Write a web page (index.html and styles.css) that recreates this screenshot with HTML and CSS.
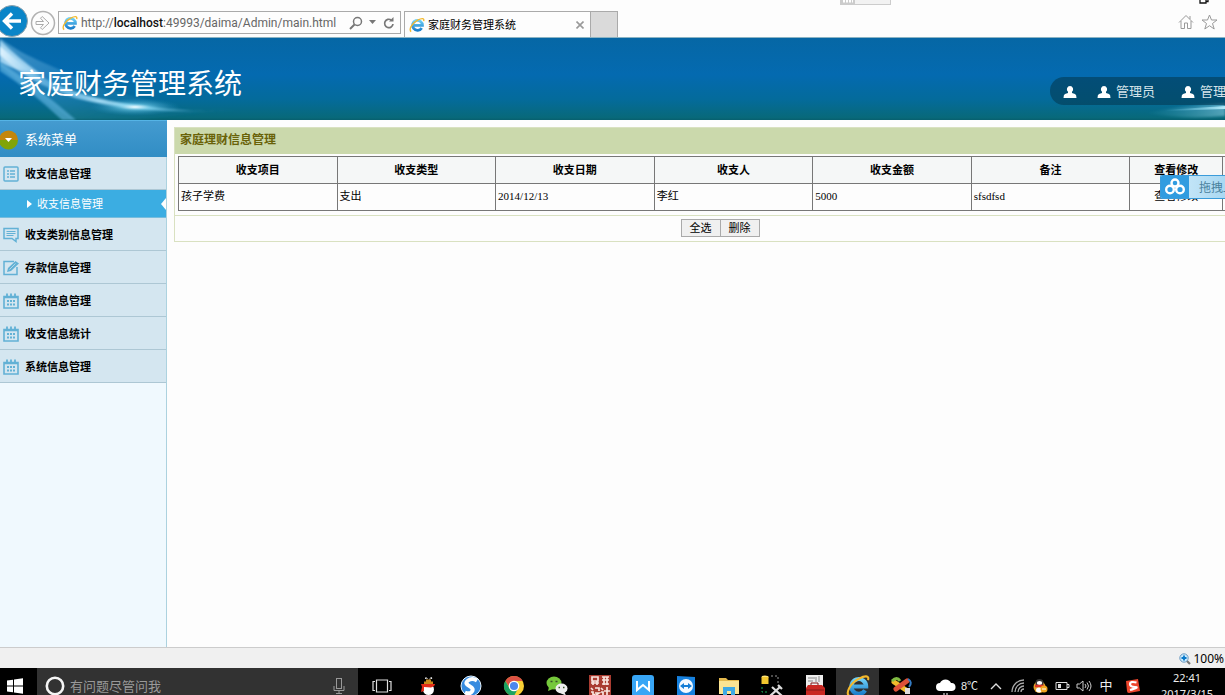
FILE: index.html
```html
<!DOCTYPE html>
<html lang="zh-CN">
<head>
<meta charset="utf-8">
<title>家庭财务管理系统</title>
<link rel="stylesheet" href="styles.css">
</head>
<body>
<svg class="defs" width="0" height="0" aria-hidden="true">
  <defs>
    <linearGradient id="ieBlue" x1="0" y1="0" x2="0" y2="1"><stop offset="0" stop-color="#6fd0f7"/><stop offset="1" stop-color="#1b7fcb"/></linearGradient>
    <symbol id="ie" viewBox="0 0 22 22">
      <path d="M17.500 15A6.800 6.800 0 1 1 18.500 11.500H6" fill="none" stroke="url(#ieBlue)" stroke-width="3.800"/>
      <path d="M3 20C-1 18 4 8 12 4.200 17 1.600 21.500 1 20.200 5.600" fill="none" stroke="#f4b92c" stroke-width="1.900"/>
    </symbol>
    <symbol id="user" viewBox="0 0 14 14"><path d="M7 1a3.300 3.300 0 0 1 2 5.800v1.200l3 1q1.500.6 1.500 4H.5q0-3.400 1.500-4l3-1V6.800A3.300 3.300 0 0 1 7 1z" fill="#fff"/></symbol>
    <symbol id="calendar" viewBox="0 0 16 16">
      <path d="M1 3.500h14v11.500H1z" fill="none" stroke="#62b1d5" stroke-width="1.600"/>
      <path d="M1 4.300h14M4 .5v3M8 .5v3M12 .5v3" stroke="#62b1d5" stroke-width="1.800"/>
      <path d="M4 8h8M4 11.500h8" stroke="#62b1d5" stroke-width="2" stroke-dasharray="2 1"/>
    </symbol>
  </defs>
</svg>

<div class="browser-bar">
  <button class="back" type="button" aria-label="后退"><svg width="34" height="34" viewBox="0 0 34 34"><circle cx="17" cy="17" r="15.500" fill="#0a85c8" stroke="#8fa3ae"/><path d="M26 17H10M17 9.500L9.500 17l7.500 7.500" fill="none" stroke="#fff" stroke-width="3.400"/></svg></button>
  <button class="forward" type="button" aria-label="前进"><svg width="26" height="26" viewBox="0 0 26 26"><circle cx="13" cy="13" r="11.500" fill="#fdfdfd" stroke="#b2b2b2" stroke-width="1.500"/><path d="M6 11.500h7.500l-3-3.300 1.700-1.700 6.800 6.500-6.800 6.500-1.700-1.700 3-3.300H6z" fill="none" stroke="#aaa"/></svg></button>
  <div class="address">
    <svg class="ie-small"><use href="#ie"/></svg>
    <div class="url" role="textbox" contenteditable="true" spellcheck="false" aria-label="地址">http://<b>localhost</b>:49993/daima/Admin/main.html</div>
    <button type="button" aria-label="搜索"><svg width="14" height="14" viewBox="0 0 14 14"><circle cx="8.500" cy="5.500" r="4" fill="none" stroke="#777" stroke-width="1.500"/><path d="M5.500 8.500L1 13" stroke="#777" stroke-width="2"/></svg></button>
    <button type="button" aria-label="展开"><svg width="8" height="5" viewBox="0 0 8 5"><path d="M0 0h7L3.500 4z" fill="#777"/></svg></button>
    <button type="button" aria-label="刷新"><svg width="12" height="14" viewBox="0 0 12 14"><path d="M10 8a4.200 4.200 0 1 1-1.800-4" fill="none" stroke="#777" stroke-width="1.700"/><path d="M6 5.500h4.500V1z" fill="#777"/></svg></button>
  </div>
  <div class="tab">
    <svg class="ie-small"><use href="#ie"/></svg>
    <span>家庭财务管理系统</span>
    <button type="button" aria-label="关闭标签页"><svg width="8" height="8" viewBox="0 0 8 8"><path d="M.5.5l7 7m0-7l-7 7" stroke="#999" stroke-width="1.600"/></svg></button>
  </div>
  <button class="new-tab" type="button" aria-label="新标签页"></button>
  <div class="browser-tools">
    <button type="button" aria-label="主页"><svg width="16" height="16" viewBox="0 0 16 16"><path d="M1 8.500L8 1.500l7 7M3 7v7.500h3.500V9h3v5.500H13V7M12 5V2" fill="none" stroke="#999"/></svg></button>
    <button type="button" aria-label="收藏"><svg width="17" height="16" viewBox="0 0 17 16"><path d="M8.500 1l2 5h5.500l-4.500 3.500 1.700 5.500-4.700-3.300L3.800 15l1.700-5.500L1 6h5.500z" fill="none" stroke="#999"/></svg></button>
  </div>
  <div class="drag-grip"><svg width="14" height="5"><path d="M2 1h10" stroke="#fff" stroke-width="3" stroke-dasharray="2 1"/></svg></div>
  <svg class="restore" width="11" height="4" viewBox="0 0 11 4"><path d="M1 0v3h6V0M7 1.500h2V0" fill="none" stroke="#111" stroke-width="1.300"/></svg>
</div>

<header class="site-header">
  <svg class="swoosh left" width="260" height="82" viewBox="0 0 260 82" aria-hidden="true">
    <defs>
      <linearGradient id="beam" x1="0" y1="0" x2="1" y2="0"><stop offset="0" stop-color="#e3f5ff" stop-opacity=".95"/><stop offset=".2" stop-color="#6fbce8" stop-opacity=".7"/><stop offset=".5" stop-color="#c2eeff"/><stop offset=".62" stop-color="#9be2fa" stop-opacity=".9"/><stop offset="1" stop-color="#3b9cc8" stop-opacity="0"/></linearGradient>
      <linearGradient id="haze" x1="0" y1="0" x2="1" y2="1"><stop offset="0" stop-color="#9bd5f6" stop-opacity=".85"/><stop offset="1" stop-color="#1a7fb8" stop-opacity=".1"/></linearGradient>
      <radialGradient id="flare"><stop offset="0" stop-color="#f0fcff"/><stop offset=".35" stop-color="#72cdec" stop-opacity=".6"/><stop offset="1" stop-color="#1c86b7" stop-opacity="0"/></radialGradient>
      <linearGradient id="tail" x1="0" y1="0" x2="1" y2="0"><stop offset="0" stop-color="#5fc4e2" stop-opacity="0"/><stop offset="1" stop-color="#b5ecfb"/></linearGradient>
      <filter id="soft"><feGaussianBlur stdDeviation="1.200"/></filter>
    </defs>
    <path d="M0 0C25 20 60 30 100 50L200 75 135 82H72Q30 54 0 28z" fill="url(#haze)" opacity=".5" filter="url(#soft)"/>
    <path d="M0 2Q18 20 42 37L23 32Q10 30 0 24z" fill="#b5e1f9" opacity=".8" filter="url(#soft)"/>
    <path d="M0 8C30 34 60 57 135 67S215 71 240 72C180 75 125 73 75 60 45 50 20 37 0 17z" fill="url(#beam)" filter="url(#soft)"/>
    <path d="M0 24Q38 49 76 82H62Q30 52 0 33z" fill="#64b7e3" opacity=".6" filter="url(#soft)"/>
    <ellipse cx="135" cy="69" rx="46" ry="9" fill="url(#flare)"/>
  </svg>
  <svg class="swoosh right" width="80" height="22" viewBox="0 0 80 22" aria-hidden="true">
    <path d="M0 15Q40 7 80 5V18Q40 22 0 15z" fill="url(#tail)" opacity=".45" filter="url(#soft)"/>
    <path d="M20 12L80 8v3L20 13z" fill="url(#tail)"/>
  </svg>
  <h1>家庭财务管理系统</h1>
  <nav class="user-nav">
    <a href="#" aria-label="用户"><svg><use href="#user"/></svg></a>
    <a href="#"><svg><use href="#user"/></svg>管理员</a>
    <a href="#"><svg><use href="#user"/></svg>管理员</a>
  </nav>
</header>

<main class="workspace">
  <aside class="sidebar">
    <h2><svg width="18" height="20" viewBox="0 0 18 20"><path d="M-1 10a9.500 9.500 0 0 1 19 0z" fill="#c3860d"/><path d="M-1 10a9.500 9.500 0 0 0 19 0z" fill="#81a409"/><path d="M5 8h7l-3.500 4z" fill="#fff"/></svg>系统菜单</h2>
    <ul class="menu">
      <li><a href="#"><svg width="16" height="16" viewBox="0 0 16 16"><rect x="1" y="1" width="14" height="14" rx="1" fill="none" stroke="#62b1d5" stroke-width="1.500"/><path d="M4 5h2M7 5h5M4 8h2M7 8h5M4 11h2M7 11h5" stroke="#62b1d5" stroke-width="1.600"/></svg>收支信息管理</a>
        <ul class="submenu"><li><a href="#"><svg width="5" height="8" viewBox="0 0 5 8"><path d="M0 0l5 4-5 4z" fill="#fff"/></svg>收支信息管理<svg class="notch" width="5" height="12" viewBox="0 0 5 12"><path d="M5 0v12L0 6z" fill="#fdfdfd"/></svg></a></li></ul>
      </li>
      <li><a href="#"><svg width="16" height="16" viewBox="0 0 16 16"><path d="M1 1.500h14v10h-2v3l-4-3H1z" fill="none" stroke="#62b1d5" stroke-width="1.500"/><path d="M3.500 4.500h9M3.500 6.500h9M3.500 8.500h7" stroke="#62b1d5"/></svg>收支类别信息管理</a></li>
      <li><a href="#"><svg width="16" height="16" viewBox="0 0 16 16"><path d="M11 1.500H1v13h13V7" fill="none" stroke="#62b1d5" stroke-width="1.500"/><path d="M4 12l1-4 7.500-7L16 3.500 8 11z" fill="#62b1d5"/><path d="M6.500 9.500l6-6" stroke="#d4e6ef" stroke-width=".7"/></svg>存款信息管理</a></li>
      <li><a href="#"><svg width="16" height="16"><use href="#calendar"/></svg>借款信息管理</a></li>
      <li><a href="#"><svg width="16" height="16"><use href="#calendar"/></svg>收支信息统计</a></li>
      <li><a href="#"><svg width="16" height="16"><use href="#calendar"/></svg>系统信息管理</a></li>
    </ul>
  </aside>
  <section class="content">
    <div class="panel">
      <h2>家庭理财信息管理</h2>
      <div class="table-wrap">
        <table>
          <colgroup><col class="wide" span="6"><col class="mid"><col></colgroup>
          <thead><tr><th>收支项目</th><th>收支类型</th><th>收支日期</th><th>收支人</th><th>收支金额</th><th>备注</th><th>查看修改</th><th></th></tr></thead>
          <tbody><tr><td>孩子学费</td><td>支出</td><td>2014/12/13</td><td>李红</td><td>5000</td><td>sfsdfsd</td><td class="center"><a href="#">查看修改</a></td><td></td></tr></tbody>
        </table>
      </div>
      <div class="actions"><button type="button">全选</button><button type="button">删除</button></div>
    </div>
  </section>
  <button class="upload" type="button"><span class="cloud"><svg width="20" height="18" viewBox="0 0 20 18"><g fill="none" stroke="#fff" stroke-width="2.400"><circle cx="10" cy="5" r="3.500"/><circle cx="5" cy="11.500" r="3.800"/><circle cx="15" cy="11.500" r="3.800"/></g></svg></span><span class="upload-text">拖拽上传</span></button>
</main>

<div class="status-bar"><svg width="12" height="12" viewBox="0 0 12 12"><path d="M7.500 7.500L11 11" stroke="#777" stroke-width="2.200"/><circle cx="5" cy="5" r="4.200" fill="#cbe9fb" stroke="#6d9ac0"/><path d="M5 2.500v5M2.500 5h5" stroke="#0878c9" stroke-width="1.800"/></svg>100%</div>

<footer class="taskbar">
  <button class="start" type="button" aria-label="开始"><svg width="16" height="16" viewBox="0 0 16 16"><path d="M0 2.500l6-.8v5.800H0zM7 1.500l9-1.300v7.300H7zM0 8.500h6v5.800l-6-.8zM7 8.500h9v7.300l-9-1.300z" fill="#fff"/></svg></button>
  <label class="search">
    <svg width="20" height="20" viewBox="0 0 20 20"><circle cx="10" cy="10" r="8.200" fill="none" stroke="#f4f4f4" stroke-width="2.600"/></svg>
    <input type="text" placeholder="有问题尽管问我" aria-label="搜索">
    <svg width="12" height="18" viewBox="0 0 12 18"><rect x="3.500" y="1.500" width="5" height="10" fill="none" stroke="#999"/><path d="M1 9v4.500h10V9M6 13.500V17M3 16.500h6" fill="none" stroke="#999"/></svg>
  </label>
  <div class="apps">
    <button class="task-view" type="button" aria-label="任务视图"><svg width="20" height="14" viewBox="0 0 20 14"><path d="M4.500 1h11v12h-11zM3 2.500H1v9h2M17 2.500h2v9h-2" fill="none" stroke="#ddd" stroke-width="1.200"/></svg></button>
    <button type="button" aria-label="雪人"><svg width="22" height="22" viewBox="0 0 22 22"><circle cx="11.500" cy="14.500" r="5.500" fill="#fff"/><path d="M7 6.500h9v2.500H7zM9 4.500h5v2H9z" fill="#c98a1c"/><path d="M8.500 4q0-3 2 0m2 0q3-3 2 0" fill="none" stroke="#fff"/><path d="M4 9h14q0 2-4 3.500l-7-.5v4l-3 1 1-5z" fill="#e42b18"/></svg></button>
    <button type="button" aria-label="搜狗浏览器"><svg width="22" height="22" viewBox="0 0 22 22"><circle cx="11" cy="11" r="10" fill="#378bdf" stroke="#e7f4ff"/><path d="M17 5.500q-5-3-9 0t2 6q4 2 2 5t-7 1" fill="none" stroke="#fff" stroke-width="4"/></svg></button>
    <button type="button" aria-label="Chrome"><svg width="22" height="22" viewBox="0 0 22 22"><circle cx="11" cy="11" r="10" fill="#f9cf35"/><path d="M2.300 6A10 10 0 0 1 19.700 6H11L7 13z" fill="#dd5144"/><path d="M2.300 6A10 10 0 0 0 11 21l4-7.500-8 0z" fill="#1ca261"/><circle cx="11" cy="11" r="4.700" fill="#4a87ee" stroke="#fff" stroke-width="1.300"/></svg></button>
    <button type="button" aria-label="微信"><svg width="22" height="22" viewBox="0 0 22 22"><ellipse cx="8" cy="8" rx="7.500" ry="6.500" fill="#75c83b"/><path d="M3 12l-1 4 5-2z" fill="#75c83b"/><ellipse cx="15.500" cy="13.500" rx="6" ry="5" fill="#eee"/><path d="M18 16.500l2 4-5-2z" fill="#eee"/><path d="M4.500 6.500h2m3 0h2M12.500 12.500h1.500m3 0h1.500" stroke="#385028" stroke-width="1.500"/></svg></button>
    <button type="button" aria-label="屏幕设计"><svg width="22" height="22" viewBox="0 0 22 22"><path d="M0 0h22v22H0z" fill="#a93c31"/><path d="M3 2h6v4H3zM2 8h8M4 6v4m4-4v4M13 2h7M13 5h7M13 9h7M15 2v8m3-8v8M2 13l2 2M2 17h2v4l2-2M6 13h4v3M6 18h4l-4 3M12 13l2 2M12 17h2v4M15 16h6M18 12v9" fill="none" stroke="#f8e5df" stroke-width="1.700"/></svg></button>
    <button type="button" aria-label="WPS"><svg width="22" height="22" viewBox="0 0 22 22"><rect width="22" height="22" rx="3" fill="#38a6f6"/><path d="M5 6v9l6-5 6 5V6" fill="none" stroke="#fff" stroke-width="2"/></svg></button>
    <button type="button" aria-label="TeamViewer"><svg width="20" height="22" viewBox="0 0 20 22"><path d="M1 1l18 1v19H1z" fill="#1681df"/><circle cx="10" cy="11" r="7" fill="#f4faff"/><path d="M4 11l4-3v2h4V8l4 3-4 3v-2H8v2z" fill="#167ed6"/></svg></button>
    <button type="button" aria-label="文件资源管理器"><svg width="22" height="22" viewBox="0 0 22 22"><path d="M1 3h7l2 2h11v14H1z" fill="#e4b94d"/><path d="M1 6h20v13H1z" fill="#fbe493"/><path d="M5 20v-8h12v8h-4v-4H9v4z" fill="#3ea9e5"/></svg></button>
    <button type="button" aria-label="数据工具"><svg width="24" height="24" viewBox="0 0 24 24"><ellipse cx="5" cy="3" rx="3.500" ry="1.500" fill="#ffe477"/><path d="M1.500 3h7v7h-7z" fill="#f2c62e"/><path d="M11 2h7v9" fill="none" stroke="#999" stroke-dasharray="2 2"/><path d="M2 13v5h7" fill="none" stroke="#18ab58" stroke-dasharray="2 2"/><path d="M12 13l10 9M20 13L10 22M18 11l4 4" stroke="#ddd" stroke-width="2.200"/></svg></button>
    <button type="button" aria-label="工具箱"><svg width="20" height="22" viewBox="0 0 20 22"><path d="M1 0h17v13H1z" fill="#eee"/><path d="M3 3h7M3 6h5M11 2v5m3-6v6" stroke="#888"/><path d="M1 13l2-3h14l3 3v8H1z" fill="#c92822"/><path d="M6 10V8h7v2M1 15h18" fill="none" stroke="#801b18"/></svg></button>
    <button class="active" type="button" aria-label="Internet Explorer"><svg width="24" height="24"><use href="#ie"/></svg></button>
    <button type="button" aria-label="设计工具"><svg width="24" height="20" viewBox="0 0 24 20"><path d="M5 6l12 8" stroke="#f0bc2c" stroke-width="5" stroke-linecap="round"/><path d="M18 5L7 13" stroke="#dc5138" stroke-width="5" stroke-linecap="round"/><path d="M3 5q5-5 8 0" fill="none" stroke="#80bb42" stroke-width="3"/><path d="M19 3q5 3 1 8" fill="none" stroke="#347cc4" stroke-width="2"/><path d="M16 12h5v6h-5z" fill="#ddd"/></svg></button>
  </div>
  <div class="tray">
    <button class="weather" type="button"><svg width="20" height="22" viewBox="0 0 20 22"><path d="M4 16a4 4 0 0 1 0-8 6 6 0 0 1 11 0 4 4 0 0 1 1 8z" fill="#fff"/><path d="M8 18v4m3-4v4" stroke="#fff"/></svg>8℃</button>
    <button type="button" aria-label="显示隐藏的图标"><svg width="12" height="8" viewBox="0 0 12 8"><path d="M1 7l5-5 5 5" fill="none" stroke="#ddd" stroke-width="1.400"/></svg></button>
    <button type="button" aria-label="网络"><svg width="14" height="14" viewBox="0 0 14 14"><g fill="none" stroke="#aaa" stroke-width="1.300"><path d="M1 13A12 12 0 0 1 13 1M4 13a9 9 0 0 1 9-9M7 13a6 6 0 0 1 6-6M10 13a3 3 0 0 1 3-3"/></g></svg></button>
    <button type="button" aria-label="QQ"><svg width="15" height="16" viewBox="0 0 15 16"><ellipse cx="6.500" cy="9" rx="6" ry="6" fill="#e2a52c"/><circle cx="6.500" cy="5" r="4" fill="#333"/><ellipse cx="6.500" cy="5" rx="2.700" ry="2" fill="#fff"/><path d="M2 8h9" stroke="#df3429" stroke-width="2.500"/><ellipse cx="6" cy="12" rx="3" ry="2.500" fill="#fff"/><circle cx="11" cy="11" r="3.500" fill="#f1a51f"/><path d="M9 11h4" stroke="#fff"/></svg></button>
    <button type="button" aria-label="电池"><svg width="15" height="10" viewBox="0 0 15 10"><path d="M1 1.500h11v7H1zM12 3.500h2v3h-2" fill="none" stroke="#ddd"/><path d="M3 3h3v4H3z" fill="#ddd"/></svg></button>
    <button type="button" aria-label="音量"><svg width="16" height="12" viewBox="0 0 16 12"><path d="M1 4h2.500L7 1v10L3.500 8H1zM9 4q2 2 0 4M11 2.500q3 3.500 0 7M13 1q4 5 0 10" fill="none" stroke="#ccc"/></svg></button>
    <button class="ime" type="button">中</button>
    <button class="sogou" type="button" aria-label="搜狗输入法"><svg width="16" height="16" viewBox="0 0 16 16"><path d="M1 3l12-2 2 12-11 2q-2 0-2-2z" fill="#ed452c"/><path d="M11.500 4.500Q5 3 5 6t5 3-5 3" fill="none" stroke="#fff" stroke-width="2.200"/></svg></button>
    <button class="clock" type="button"><time>22:41</time><time>2017/3/15</time></button>
  </div>
</footer>
</body>
</html>
```
FILE: styles.css
```css
* { box-sizing: border-box; }
body {
  display: flex;
  flex-direction: column;
  height: 100vh;
  margin: 0;
  overflow: hidden;
  background: #fdfdfd;
  color: #000;
  font: 11px/16px "Liberation Sans", "Noto Sans CJK SC", sans-serif;
}
button { padding: 0; border: 0; background: none; color: inherit; font: inherit; }
a { color: inherit; text-decoration: none; }
h1, h2, ul { margin: 0; padding: 0; list-style: none; }
svg { display: block; flex: none; }
.defs { position: absolute; }

.browser-bar {
  position: relative;
  display: flex;
  flex: none;
  align-items: flex-end;
  height: 38px;
  border-bottom: 1px solid #8bb4c4;
  overflow: hidden;
}
.back { margin-left: -5px; height: 33px; }
.forward { margin-left: 1px; height: 28px; }
.address {
  display: flex;
  align-items: center;
  gap: 6px;
  width: 343px;
  height: 23px;
  margin: 0 3px 3px 2px;
  padding: 0 5px 0 3px;
  border: 1px solid #aaa;
}
.ie-small { width: 16px; height: 16px; }
.url {
  flex: 1;
  margin-left: -3px;
  white-space: nowrap;
  color: #666;
  font: 12px/18px Roboto, sans-serif;
}
.url b { color: #111; font-weight: 500; }
.tab {
  display: flex;
  align-items: center;
  gap: 3px;
  width: 187px;
  height: 26px;
  padding: 0 6px 0 4px;
  border: 1px solid #aaa;
  border-bottom: 0;
}
.tab button { margin-left: auto; }
.new-tab { width: 27px; height: 26px; border: 1px solid #aaa; border-width: 1px 1px 0 0; background: #dadada; }
.browser-tools { display: flex; gap: 7px; margin: 0 7px 7px auto; }
.drag-grip {
  position: absolute;
  top: -1px;
  left: 840px;
  width: 51px;
  height: 6px;
  border: 1px solid #ccc;
  background: #f2f2f2;
}
.drag-grip svg { background: #ccc; }
.restore { position: absolute; top: 0; right: 15px; }

.site-header {
  position: relative;
  display: flex;
  flex: none;
  align-items: center;
  justify-content: space-between;
  height: 82px;
  padding-left: 18px;
  overflow: hidden;
  background: linear-gradient(#0667a5, #046ab0 45%, #046b9b 75%, #08697a 97%, #075f6e);
}
.swoosh { position: absolute; }
.left { top: 0; left: 0; }
.right { right: 0; bottom: 0; }
.site-header h1 {
  position: relative;
  padding-top: 12px;
  color: #fff;
  font-size: 28px;
  font-weight: 400;
  line-height: 40px;
}
.user-nav {
  position: relative;
  display: flex;
  align-items: center;
  gap: 20px;
  width: 175px;
  height: 28px;
  margin-top: 24px;
  padding: 2px 0 0 13px;
  border-radius: 14px 0 0 14px;
  overflow: hidden;
  background: rgba(3, 58, 83, .6);
  color: #d5e4ea;
  font-size: 13px;
  white-space: nowrap;
}
.user-nav a { display: flex; flex: none; align-items: center; gap: 5px; }
.user-nav a + a + a { margin-left: 6px; }
.user-nav svg { width: 14px; height: 14px; }

.workspace { position: relative; display: flex; flex: 1; min-height: 0; overflow: hidden; }
.sidebar { flex: none; width: 167px; border-right: 1px solid #acd2df; background: #f0f9fe; }
.sidebar h2 {
  display: flex;
  align-items: center;
  gap: 7px;
  height: 37px;
  margin-right: -1px;
  padding-top: 1px;
  border-top: 1px solid #55b4e6;
  background: linear-gradient(#449bd0, #318dc4);
  color: #fff;
  font-size: 13px;
  font-weight: 400;
}
.menu a {
  display: flex;
  align-items: center;
  gap: 6px;
  height: 33px;
  padding: 1px 0 0 3px;
  border-bottom: 1px solid #adc7d4;
  background: #d4e6f0;
  font-weight: 700;
}
.menu .submenu a {
  position: relative;
  gap: 5px;
  height: 28px;
  padding-left: 27px;
  border-bottom-color: #77bddd;
  background: #3bade2;
  color: #fff;
  font-weight: 400;
}
.notch { position: absolute; right: 0; top: 8px; }

.content { flex: 1; min-width: 0; padding: 7px 0 0 7px; }
.panel { margin-right: -41px; border: 1px solid #d9e1c1; }
.panel h2 {
  height: 26px;
  padding-left: 5px;
  background: #cbd9ac;
  color: #696208;
  font-size: 12px;
  font-weight: 700;
  line-height: 24px;
}
.table-wrap { padding: 2px 3px 4px; border-bottom: 1px solid #d9e1c1; }
table {
  width: 100%;
  table-layout: fixed;
  border-collapse: collapse;
  font-family: "Liberation Serif", "Noto Sans CJK SC", serif;
}
.wide { width: 14.64%; }
.mid { width: 8.6%; }
th, td { height: 27px; padding: 0 2px; border: 1px solid #777; white-space: nowrap; }
th { background: #f5f7f7; font-weight: 700; }
td { padding-bottom: 2px; text-align: left; }
.center { text-align: center; }
.actions { display: flex; justify-content: center; height: 25px; padding: 3px 0 4px; }
.actions button { width: 40px; border: 1px solid #aaa; background: #f0f0f0; line-height: 14px; }
.actions button + button { margin-left: -1px; }
.upload {
  position: absolute;
  top: 55px;
  right: 0;
  display: flex;
  width: 65px;
  height: 24px;
  border: 1px solid #3b9cda;
  border-right: 0;
  border-radius: 2px 0 0 2px;
  overflow: hidden;
  background: linear-gradient(90deg, #d5eefb, #a9d8f2);
  color: #49819d;
  font-size: 12px;
  line-height: 24px;
}
.cloud { display: flex; flex: none; align-items: center; justify-content: center; width: 28px; height: 22px; background: #319ce0; }
.upload-text { flex: none; margin-left: 10px; }

.status-bar {
  display: flex;
  flex: none;
  align-items: center;
  justify-content: flex-end;
  gap: 2px;
  height: 21px;
  padding: 2px 1px 0 0;
  border-top: 1px solid #ccc;
  background: #f0f0f0;
  font: 12px/18px "Noto Sans", sans-serif;
}

.taskbar { display: flex; flex: none; height: 27px; overflow: hidden; background: #000; color: #eee; }
.taskbar > * { height: 36px; }
.start { flex: none; width: 37px; padding-left: 7px; }
.search { display: flex; align-items: center; gap: 5px; width: 321px; padding: 0 13px 0 8px; background: #323232; }
.search input {
  flex: 1;
  min-width: 0;
  padding: 0;
  border: 0;
  outline: 0;
  background: none;
  color: #eee;
  font: 13px/20px "Noto Sans CJK SC", sans-serif;
}
.search input::placeholder { color: #999; opacity: 1; }
.apps { display: flex; }
.apps button, .tray button { display: flex; align-items: center; justify-content: center; width: 43px; height: 36px; }
.apps .task-view { width: 48px; }
.apps .active { background: #303030; }
.tray { display: flex; margin-left: auto; }
.tray button { width: 22px; }
.tray .weather { gap: 5px; width: 56px; font-size: 11px; }
.tray .ime { font-size: 13px; }
.tray .sogou { width: 32px; }
.tray .clock { flex-direction: column; width: 76px; font: 11px/16px "Noto Sans", sans-serif; }
```
